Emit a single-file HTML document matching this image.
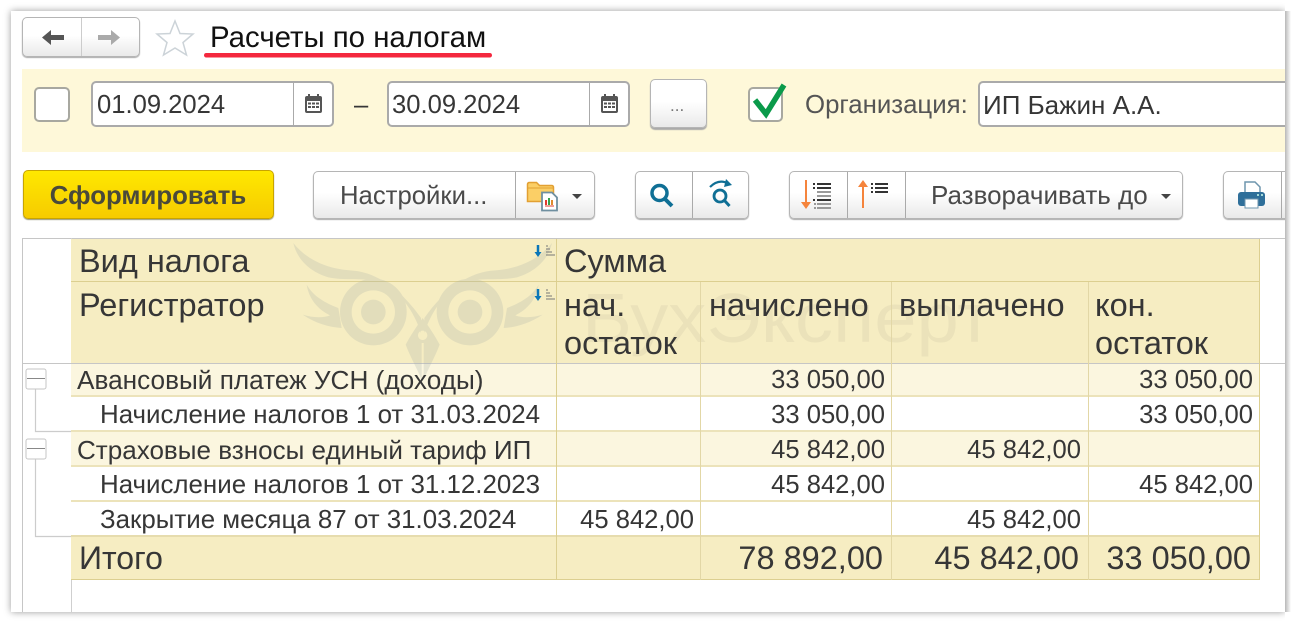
<!DOCTYPE html>
<html lang="ru"><head><meta charset="utf-8"><title>Расчеты по налогам</title>
<style>
html,body{margin:0;padding:0;background:#fff}
#p{position:relative;width:1296px;height:623px;overflow:hidden;background:#fff;font-family:"Liberation Sans",sans-serif;color:#363636;filter:blur(.35px)}
#c{position:absolute;left:11px;top:11px;width:1274px;height:601px;background:#fff;box-shadow:0 0 7px rgba(0,0,0,.4)}
.a{position:absolute}
.t{position:absolute;white-space:nowrap;line-height:1;font-size:25.6px}
.l{font-size:26px}
.h{font-size:32.5px}
.b{position:absolute;box-sizing:border-box;border:1px solid #b5b5b5;border-radius:5px;background:linear-gradient(#fff 45%,#e9e9e9);box-shadow:0 1px 1px #aaa}
.d{position:absolute;width:1px;background:#aaa}
.i{position:absolute;box-sizing:border-box;border:2px solid #aaa;border-radius:5px;background:#fff}
.r{position:absolute;left:71px;width:1188px;box-sizing:border-box}
.v{position:absolute;width:1px;background:#e2d7a6}
svg{position:absolute;overflow:visible}
</style></head><body><div id="p">
<div id="c"></div>

<!-- nav -->
<div class="b" style="left:22px;top:17px;width:118px;height:40px"></div>
<div class="d" style="left:81px;top:18px;height:38px;background:#ccc"></div>
<svg style="left:0;top:0" width="1296" height="623">
<path d="M64 35H51V30L42 37.500 51 45V40H64Z" fill="#555"/>
<path d="M98 35H111V30L120 37.500 111 45V40H98Z" fill="#aaa"/>
<path d="M175 21l5 12.500 13 .5-10 8.500 3.500 12.500-11.500-7-11.500 7 3.500-12.500-10-8.500 13-.5z" fill="#fff" stroke="#ccd3d8" stroke-width="1.500"/>
<rect x="204" y="53" width="288" height="4.500" rx="2.200" fill="#f4283e"/>
</svg>
<div class="t" style="left:210px;top:23px;font-size:29.4px;color:#111">Расчеты по налогам</div>

<!-- filter -->
<div class="a" style="left:22px;top:69px;width:1263px;height:83px;background:#fef8d9"></div>
<div class="i" style="left:34px;top:87px;width:36px;height:35px;border-width:2.500px;border-color:#a8a8a0"></div>
<div class="i" style="left:91px;top:81px;width:243px;height:46px"></div>
<div class="d" style="left:293px;top:82px;height:44px"></div>
<div class="t" style="left:97px;top:93px">01.09.2024</div>
<div class="t" style="left:354px;top:93px">–</div>
<div class="i" style="left:387px;top:81px;width:243px;height:46px"></div>
<div class="d" style="left:589px;top:82px;height:44px"></div>
<div class="t" style="left:392px;top:93px">30.09.2024</div>
<svg style="left:0;top:0" width="1296" height="623" fill="#555">
<g><rect x="305" y="96" width="17" height="17" rx="2"/><rect x="308" y="94" width="2" height="4"/><rect x="317" y="94" width="2" height="4"/><rect x="307" y="101" width="13" height="10" fill="#fff"/><path d="M308 102.500h3v2h-3zM312 102.500h3v2h-3zM316 102.500h3v2h-3zM308 106h3v2h-3zM312 106h3v2h-3zM316 106h3v2h-3z"/></g>
<g transform="translate(296 0)"><rect x="305" y="96" width="17" height="17" rx="2"/><rect x="308" y="94" width="2" height="4"/><rect x="317" y="94" width="2" height="4"/><rect x="307" y="101" width="13" height="10" fill="#fff"/><path d="M308 102.500h3v2h-3zM312 102.500h3v2h-3zM316 102.500h3v2h-3zM308 106h3v2h-3zM312 106h3v2h-3zM316 106h3v2h-3z"/></g>
</svg>
<div class="b" style="left:650px;top:79px;width:57px;height:49px;box-shadow:0 2px 1px #aaa"></div>
<div class="t" style="left:670px;top:97px;font-size:17px;color:#777">...</div>
<div class="i" style="left:748px;top:87px;width:35px;height:35px;border-width:2.500px;border-color:#a8a8a0"></div>
<svg style="left:0;top:0" width="1296" height="623"><path d="M755 100l11 14 18-29" fill="none" stroke="#0a9a4a" stroke-width="5.500"/></svg>
<div class="t" style="left:805px;top:93px;color:#555;font-size:25.8px">Организация:</div>
<div class="a" style="left:978px;top:81px;width:320px;height:46px;box-sizing:border-box;border:2px solid #aaa;border-radius:5px;background:#fff"></div>
<div class="t l" style="left:983px;top:92px">ИП Бажин А.А.</div>

<!-- toolbar -->
<div class="a" style="left:23px;top:170px;width:251px;height:49px;box-sizing:border-box;border:1px solid #c8a400;border-radius:5px;background:linear-gradient(#ffe800,#f6cb00);box-shadow:0 1px 1px #997"></div>
<div class="t" style="left:22px;width:252px;text-align:center;top:184px;font-weight:bold;color:#4a4a3a;font-size:25.8px">Сформировать</div>
<div class="b" style="left:313px;top:171px;width:282px;height:48px"></div>
<div class="d" style="left:515px;top:172px;height:46px"></div>
<div class="t" style="left:340px;top:184px;color:#4a4a4a;font-size:25.7px">Настройки...</div>
<div class="b" style="left:635px;top:171px;width:114px;height:48px"></div>
<div class="d" style="left:692px;top:172px;height:46px"></div>
<div class="b" style="left:789px;top:171px;width:394px;height:48px"></div>
<div class="d" style="left:847px;top:172px;height:46px"></div>
<div class="d" style="left:905px;top:172px;height:46px"></div>
<div class="t l" style="left:931px;top:182px;color:#4a4a4a">Разворачивать до</div>
<div class="b" style="left:1223px;top:171px;width:80px;height:48px"></div>
<div class="d" style="left:1281px;top:172px;height:46px"></div>
<svg style="left:0;top:0" width="1296" height="623">
<!-- folder + doc -->
<path d="M527.500 201.500V184.500q0-2 2-2h7l3 3h12q2 0 2 2v14z" fill="#fbcf66" stroke="#e2a033" stroke-width="1.500"/>
<path d="M528 188h25" stroke="#e2a033"/>
<path d="M542 192.500h10l5 5v13h-15z" fill="#fff" stroke="#6f8fa0" stroke-width="1.800"/>
<path d="M546 205v-5" stroke="#e23b2e" stroke-width="2"/><path d="M549 205v-7" stroke="#37a04a" stroke-width="2"/><path d="M552 205v-5" stroke="#e08a2e" stroke-width="2"/><path d="M545 206h9" stroke="#e23b2e"/>
<path d="M572 194h10l-5 5z" fill="#444"/>
<!-- search -->
<circle cx="659.500" cy="193" r="7.500" fill="none" stroke="#0f6f95" stroke-width="3.500"/><path d="M665 199l7 7" stroke="#0f6f95" stroke-width="4"/>
<circle cx="720" cy="196" r="6" fill="none" stroke="#0f6f95" stroke-width="2.800"/><path d="M724.500 200.500l5 5.500" stroke="#0f6f95" stroke-width="3"/>
<path d="M710 187q9-9 19-3" fill="none" stroke="#0f6f95" stroke-width="2.200"/><path d="M726 179l6 6-8 2z" fill="#0f6f95"/>
<!-- sort -->
<path d="M806 180v22" stroke="#f5843c" stroke-width="2"/><path d="M801 202h10l-5 7z" fill="#f5843c"/>
<path d="M813 184h2M817 184h14M813 188h2M817 188h14M813 200h2M817 200h14" stroke="#333" stroke-width="2"/>
<path d="M817 192h14M817 196h14M817 204h14M817 208h14M814 204h2M814 208h2" stroke="#999" stroke-width="2"/>
<path d="M863 186v22" stroke="#f5843c" stroke-width="2"/><path d="M858 187h10l-5-7z" fill="#f5843c"/>
<path d="M871 184h2M875 184h13M871 188h2M875 188h13M871 192h2M875 192h13" stroke="#333" stroke-width="2"/>
<path d="M1161 194h10l-5 5z" fill="#444"/>
<!-- printer -->
<path d="M1245 196v-14h10l5 5v9z" fill="#fff" stroke="#6f96ae" stroke-width="1.500"/>
<rect x="1238" y="192" width="27" height="14" rx="3" fill="#2f6f9a"/>
<rect x="1245" y="199" width="13" height="9" fill="#fff" stroke="#6f96ae"/>
<path d="M1257 195h2M1261 195h2" stroke="#cfe" stroke-width="1.500"/>
</svg>

<!-- table backgrounds -->
<div class="a" style="left:22px;top:238px;width:1263px;height:1px;background:#c6c6c6"></div>
<div class="a" style="left:22px;top:238px;width:1px;height:374px;background:#c6c6c6"></div>
<div class="a" style="left:71px;top:238px;width:1px;height:374px;background:#cfcfcf"></div>
<div class="r" style="top:239px;height:43px;background:#f6edc2;border-bottom:1px solid #dccf90"></div>
<div class="r" style="top:282px;height:81px;background:#f6edc2"></div>
<div class="r" style="top:363px;height:34px;background:#fbf6df;border-bottom:2px solid #ece3ba"></div>
<div class="r" style="top:397px;height:35px;background:#fff;border-bottom:2px solid #ece3ba"></div>
<div class="r" style="top:432px;height:35px;background:#fbf6df;border-bottom:2px solid #ece3ba"></div>
<div class="r" style="top:467px;height:35px;background:#fff;border-bottom:2px solid #ece3ba"></div>
<div class="r" style="top:502px;height:35px;background:#fff;border-bottom:2px solid #e6dcae"></div>
<div class="r" style="top:537px;height:43px;background:#f6edc2;border-bottom:1px solid #dccf90"></div>
<div class="a" style="left:22px;top:363px;width:1263px;height:1px;background:#c6c6c6"></div>

<!-- watermark -->
<svg style="left:285px;top:238px;opacity:.25" width="280" height="180" viewBox="0 0 840 540" fill="#a8b0a8">
<path d="M25 15C60 60 120 92 195 97C270 100 345 150 408 240V285C385 215 345 165 295 137C250 115 190 130 130 118C70 100 35 60 25 15Z"/>
<path d="M801 15C766 60 706 92 631 97C556 100 481 150 418 240V285C441 215 481 165 531 137C576 115 636 130 696 118C756 100 791 60 801 15Z"/>
<path fill-rule="evenodd" d="M265 122a100 100 0 1 0 .1 0ZM265 157a65 65 0 1 1-.1 0Z"/>
<circle cx="265" cy="222" r="37"/>
<path fill-rule="evenodd" d="M555 122a100 100 0 1 0 .1 0ZM555 157a65 65 0 1 1-.1 0Z"/>
<circle cx="555" cy="222" r="37"/>
<path d="M65 140C85 175 120 195 160 210L170 270C130 268 90 255 53 230C85 240 115 240 135 232C100 215 72 185 65 140Z"/>
<path d="M761 140C741 175 706 195 666 210L656 270C696 268 736 255 773 230C741 240 711 240 691 232C726 215 754 185 761 140Z"/>
<path fill-rule="evenodd" d="M413 240C395 265 375 295 362 320C375 355 395 390 410 425V315H416V425C431 390 451 355 464 320C451 295 431 265 413 240ZM413 278a14 14 0 1 1-.1 0Z"/>
</svg>
<svg style="left:0;top:0" width="1296" height="623"><text x="582" y="342" font-family="Liberation Sans" font-size="70" textLength="410" lengthAdjust="spacingAndGlyphs" fill="#8d8d7a" fill-opacity=".1">БухЭксперт</text></svg>

<!-- column lines -->
<div class="v" style="left:556px;top:239px;height:341px;background:#dccf90"></div>
<div class="v" style="left:700px;top:282px;height:298px"></div>
<div class="v" style="left:891px;top:282px;height:298px"></div>
<div class="v" style="left:1088px;top:282px;height:298px"></div>
<div class="v" style="left:1259px;top:239px;height:341px;background:#dccf90"></div>

<!-- tree -->
<svg style="left:0;top:0" width="1296" height="623">
<path d="M35.500 389V431.500H71M35.500 459V536.500H71" fill="none" stroke="#ccc" stroke-width="1.200"/>
<rect x="26" y="369" width="20" height="20" rx="2" fill="#fff" stroke="#c6c6c6"/><path d="M27 378.500h18" stroke="#888"/>
<rect x="26" y="439" width="20" height="20" rx="2" fill="#fff" stroke="#c6c6c6"/><path d="M27 448.500h18" stroke="#888"/>
<!-- sort marks -->
<g><path d="M538 245v8" stroke="#0a76b8" stroke-width="2.500"/><path d="M534.500 252h7l-3.500 5z" fill="#0a76b8"/><path d="M546 246h2M546 249h4M546 252h6M546 255h9" stroke="#777"/></g>
<g transform="translate(0 44)"><path d="M538 245v8" stroke="#0a76b8" stroke-width="2.500"/><path d="M534.500 252h7l-3.500 5z" fill="#0a76b8"/><path d="M546 246h2M546 249h4M546 252h6M546 255h9" stroke="#777"/></g>
</svg>

<!-- header text -->
<div class="t h" style="left:79px;top:245px">Вид налога</div>
<div class="t h" style="left:564px;top:245px">Сумма</div>
<div class="t h" style="left:79px;top:288.500px">Регистратор</div>
<div class="t h" style="left:564px;top:288.500px">нач.</div>
<div class="t h" style="left:564px;top:326.500px">остаток</div>
<div class="t h" style="left:709px;top:288.500px">начислено</div>
<div class="t h" style="left:899px;top:288.500px">выплачено</div>
<div class="t h" style="left:1095px;top:288.500px">кон.</div>
<div class="t h" style="left:1095px;top:326.500px">остаток</div>

<!-- rows -->
<div class="t" style="left:77px;top:366.500px;font-size:26.2px">Авансовый платеж УСН (доходы)</div>
<div class="t" style="right:411px;top:368px">33 050,00</div>
<div class="t" style="right:43px;top:368px">33 050,00</div>
<div class="t" style="left:100px;top:403px;font-size:25.9px">Начисление налогов 1 от 31.03.2024</div>
<div class="t" style="right:411px;top:403px">33 050,00</div>
<div class="t" style="right:43px;top:403px">33 050,00</div>
<div class="t" style="left:77px;top:436.500px;font-size:26.05px">Страховые взносы единый тариф ИП</div>
<div class="t" style="right:411px;top:438px">45 842,00</div>
<div class="t" style="right:215px;top:438px">45 842,00</div>
<div class="t" style="left:100px;top:473px;font-size:25.9px">Начисление налогов 1 от 31.12.2023</div>
<div class="t" style="right:411px;top:473px">45 842,00</div>
<div class="t" style="right:43px;top:473px">45 842,00</div>
<div class="t" style="left:100px;top:508px;font-size:25.9px">Закрытие месяца 87 от 31.03.2024</div>
<div class="t" style="right:602px;top:508px">45 842,00</div>
<div class="t" style="right:215px;top:508px">45 842,00</div>
<div class="t" style="left:79px;top:542px;font-size:32px">Итого</div>
<div class="t" style="right:413px;top:542px;font-size:32.500px">78 892,00</div>
<div class="t" style="right:217px;top:542px;font-size:32.500px">45 842,00</div>
<div class="t" style="right:45px;top:542px;font-size:32.500px">33 050,00</div>

<!-- mask right of card -->
<div class="a" style="left:1285px;top:0;width:11px;height:623px;background:#fff"></div>
<div class="a" style="left:1285px;top:11px;width:6px;height:601px;background:linear-gradient(to right,rgba(0,0,0,.28),rgba(0,0,0,0))"></div>
</div></body></html>
